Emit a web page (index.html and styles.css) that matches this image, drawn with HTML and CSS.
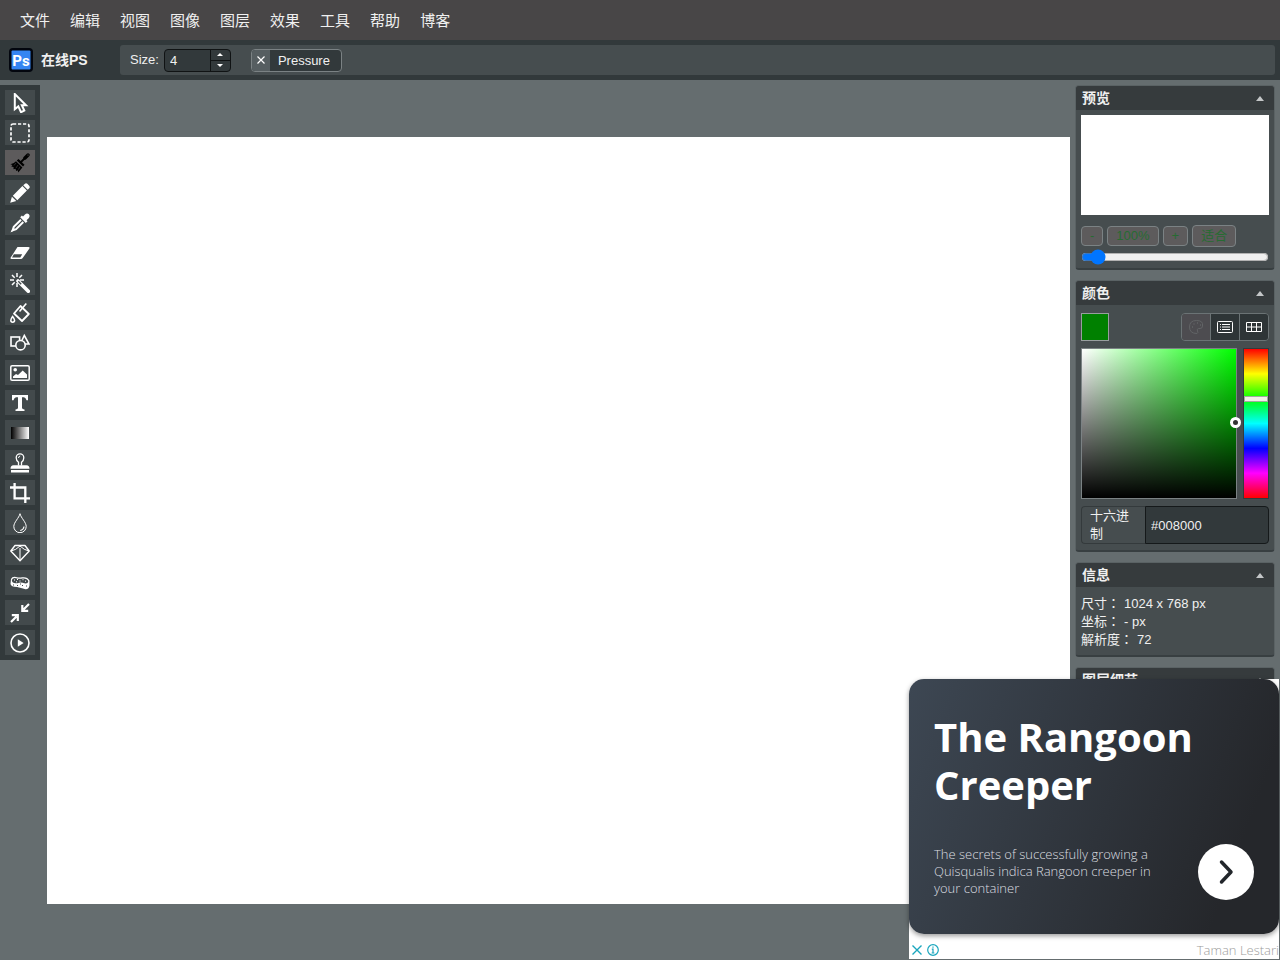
FILE: index.html
```html
<!DOCTYPE html>
<html lang="zh-CN">
<head>
<meta charset="utf-8">
<meta name="viewport" content="width=device-width, initial-scale=1">
<title>在线PS</title>
<link rel="stylesheet" href="styles.css">
</head>
<body>
<nav class="menu">
  <a href="#">文件</a><a href="#">编辑</a><a href="#">视图</a><a href="#">图像</a><a href="#">图层</a><a href="#">效果</a><a href="#">工具</a><a href="#">帮助</a><a href="#">博客</a>
</nav>
<header class="topbar">
  <a class="brand" href="#">
    <svg class="logo" viewBox="0 0 24 24" aria-hidden="true"><rect width="24" height="24" rx="4" fill="#03060e"/><rect x="2.500" y="2.500" width="19" height="19" rx="1" fill="#3585f2"/><text x="12" y="17.500" text-anchor="middle" class="logo-text">Ps</text></svg>
    <span>在线PS</span>
  </a>
  <div class="attributes">
    <label for="size">Size:</label>
    <div class="stepper">
      <input id="size" type="text" value="4">
      <div class="steps">
        <button type="button" aria-label="Increase"><i class="caret up"></i></button>
        <button type="button" aria-label="Decrease"><i class="caret down"></i></button>
      </div>
    </div>
    <button class="toggle" type="button"><span class="toggle-mark"><svg viewBox="0 0 8 8"><path d="M.5.5l7 7M7.500.5l-7 7" stroke="#fff" stroke-width="1.200"/></svg></span><span class="toggle-name">Pressure</span></button>
  </div>
</header>
<div class="workspace">
  <aside class="tools">
    <button type="button" aria-label="Select"><svg viewBox="0 0 20 20"><path d="M4.800 1V16.200L8.300 13.400 11 19.200 14.300 17.600 11.800 12.200H16Z" fill="none" stroke="#fff" stroke-width="2"/></svg></button>
    <button type="button" aria-label="Selection"><svg viewBox="0 0 20 20"><rect x="1" y="1" width="18" height="18" rx="2" fill="none" stroke="#fff" stroke-width="1.700" stroke-dasharray="3.200 1.800"/></svg></button>
    <button type="button" class="active" aria-label="Brush"><svg viewBox="0 0 20 20"><path d="M10.500 9.500 17 3" stroke="#000" stroke-width="1.800"/><path d="M15 5 18 2" stroke="#000" stroke-width="3.400" stroke-linecap="round"/><circle cx="18" cy="2" r=".6" fill="#5d5b5c"/><path d="M8.500 6 14.500 11.800 13 13.500 6.800 7.500Z" fill="#000"/><path d="M6 8.200 12.400 14.500 8.300 19.500 7.700 17.300 6.200 18 5.500 15.800 3.500 16.300 3.600 14 1.300 13.600 2.500 12 .4 11.200Q3.800 10.800 6 8.200Z" fill="#000"/><path d="M6 10 4 12.500M8 12 6 15M10 13.700 8.500 16.500" stroke="#5d5b5c" stroke-width=".5"/></svg></button>
    <button type="button" aria-label="Pencil"><svg viewBox="0 0 20 20"><path d="M14.700.9Q16-.2 17.300.8L19.200 2.700Q20.300 4 19.200 5.300L17.700 6.800 13.200 2.300ZM12.400 3.100 16.900 7.600 7.300 17.200 2.800 12.700ZM1.900 13.700 6.300 18.100.2 19.800Z" fill="#fff"/></svg></button>
    <button type="button" aria-label="Pick color"><svg viewBox="0 0 20 20"><path d="M13 3.600 15 1.400Q17-.3 18.900 1.300 20.400 3.200 18.700 5.200L16.500 7.200 17.500 8.200 15.800 9.900 10.200 4.300 11.900 2.600Z" fill="#fff"/><path d="M11 6.700 3.800 13.900 2.600 17.400 6.100 16.200 13.300 9" fill="none" stroke="#fff" stroke-width="2"/><path d="M2.500 16 .4 19.600 4 17.600Z" fill="#fff"/></svg></button>
    <button type="button" aria-label="Erase"><svg viewBox="0 0 20 20"><path d="M7.500 4H18.300Q20.300 4 19.200 5.700L12.700 15.100Q12 16 11 16H1.700Q-.3 16 .9 14.300Z" fill="#fff"/><path d="M3.900 11.200H12.200L10.300 14.500H2Z" fill="#434a4c"/></svg></button>
    <button type="button" aria-label="Magic wand"><svg viewBox="0 0 20 20"><path d="M8 8 18.300 18.300" stroke="#fff" stroke-width="3.600" stroke-linecap="round"/><path d="M8.300 8.300 11.200 11.200" stroke="#434a4c" stroke-width="1.400"/><path d="M7 0V4M7 10V14M0 7H4M10 7H14M2 2 4.700 4.700M12 2 9.300 4.700M2 12 4.700 9.300" stroke="#fff" stroke-width="1.500"/></svg></button>
    <button type="button" aria-label="Fill"><svg viewBox="0 0 20 20"><path d="M10.500 3 18.800 11 12 18 4 10.500Z" fill="none" stroke="#fff" stroke-width="1.800" stroke-linejoin="round"/><path d="M9.500 8.500 16.300.6" stroke="#fff" stroke-width="1.600"/><path d="M2.600 13.500Q.8 16 .8 17.300A1.900 1.900 0 0 0 4.600 17.300Q4.600 16 2.600 13.500Z" fill="none" stroke="#fff" stroke-width="1.500"/></svg></button>
    <button type="button" aria-label="Shapes"><svg viewBox="0 0 20 20"><g fill="#434a4c" stroke="#fff" stroke-width="1.600"><path d="M14.300 2.400 19 11H10.200Z"/><rect x="1" y="4" width="8.600" height="9"/><circle cx="10.500" cy="12.200" r="4.700"/></g></svg></button>
    <button type="button" aria-label="Image"><svg viewBox="0 0 20 20"><rect x=".8" y="2.800" width="18.400" height="14.400" rx="1.300" fill="none" stroke="#fff" stroke-width="1.500"/><circle cx="5.200" cy="6.700" r="1.800" fill="#fff"/><path d="M3 15V13.500L6 11 8 12 12.700 7.500 17 11.500V15Z" fill="#fff"/></svg></button>
    <button type="button" aria-label="Text"><svg viewBox="0 0 20 20"><path d="M2 2H18V7.300H16.500Q15.800 4.500 14 4.200H12V15Q12.200 16.400 14.500 16.500V18H5.500V16.500Q7.800 16.400 8 15V4.200H6Q4.200 4.500 3.500 7.300H2Z" fill="#fff"/></svg></button>
    <button type="button" aria-label="Gradient"><svg viewBox="0 0 20 20"><defs><linearGradient id="shade"><stop stop-color="#000"/><stop offset="1" stop-color="#fff"/></linearGradient></defs><rect x="1" y="4" width="18" height="12" fill="url(#shade)"/></svg></button>
    <button type="button" aria-label="Clone"><svg viewBox="0 0 20 20"><path d="M8.500 12.500V9.200Q6.200 7.500 6.200 4.700A3.800 3.800 0 0 1 13.800 4.700Q13.800 7.500 11.500 9.200V12.500" fill="none" stroke="#fff" stroke-width="1.300"/><path d="M8.500 5Q8.500 3.200 10.200 3" fill="none" stroke="#fff"/><path d="M3.500 12.200H16.500Q19.500 12.500 19.500 15.700H.5Q.5 12.500 3.500 12.200ZM1 17H19V19.400H1Z" fill="#fff"/></svg></button>
    <button type="button" aria-label="Crop"><svg viewBox="0 0 20 20"><path d="M0 4.500H15.300V20M4.600 0V15.300H20" fill="none" stroke="#fff" stroke-width="2.300"/></svg></button>
    <button type="button" aria-label="Blur"><svg viewBox="0 0 20 20"><path d="M10 .7C9 5 3.800 9.300 3.800 13.500A6.200 6.200 0 0 0 16.200 13.500C16.200 9.300 11 5 10 .7Z" fill="none" stroke="#fff" stroke-width="1"/><path d="M14 13.500Q13.500 17 10.200 17.500" fill="none" stroke="#fff" stroke-width="1.200"/></svg></button>
    <button type="button" aria-label="Sharpen"><svg viewBox="0 0 20 20"><path d="M5 2.500H15L19.200 8 10 17.800.8 8Z" fill="none" stroke="#fff" stroke-width="1.400" stroke-linejoin="round"/><path d="M1 8 5.700 6.300 10 3 14.300 6.300 19 8M10 5V17" fill="none" stroke="#fff" stroke-width="1"/></svg></button>
    <button type="button" aria-label="Desaturate"><svg viewBox="0 0 20 20"><path d="M1 6Q2.200 3.300 6 4 9.500 5 12 4.300 17.500 3.500 19.500 7.500V12.500Q19 16.400 15.500 16.200L12 15.200 7 14Q1 14 .5 11Z" fill="#fff"/><path d="M1.800 7Q3 4.500 6 5.200 9.500 6.200 12.500 5.500 17 5 18.300 8.200 18 11 14.500 10.300 11 8.700 7.500 10.200 2 11 1.800 7Z" fill="#434a4c"/><path d="M4 7h1M7 6.500h1M9.500 8h1M12.500 6.700h1M15 8.200h1M6 8.800h1" stroke="#fff" stroke-width="1"/><path d="M3 12h1M7 12.500h1M12 12.500h1M16 13h1M10 11h1" stroke="#434a4c" stroke-width="1"/></svg></button>
    <button type="button" aria-label="Pinch"><svg viewBox="0 0 20 20"><path d="M19 1 13.500 6.500M12.300 2V7.800H18.200M1 19 6.500 13.500M1.800 12.200H7.800V18" fill="none" stroke="#fff" stroke-width="2.200"/></svg></button>
    <button type="button" aria-label="Animation"><svg viewBox="0 0 20 20"><circle cx="10" cy="10" r="9" fill="none" stroke="#fff" stroke-width="1.600"/><path d="M7.800 6.300V13.700L13.600 10Z" fill="#fff"/></svg></button>
  </aside>
  <main class="stage"><canvas class="paper"></canvas></main>
  <aside class="panels">
    <section class="panel">
      <h2>预览<i class="caret up"></i></h2>
      <div class="panel-body preview-body">
        <div class="preview"></div>
        <div class="zoom"><button type="button">-</button><button type="button">100%</button><button type="button">+</button><button type="button" class="fit">适合</button></div>
        <input class="zoom-range" type="range" min="0" max="100" value="5" aria-label="Zoom">
      </div>
    </section>
    <section class="panel">
      <h2>颜色<i class="caret up"></i></h2>
      <div class="panel-body color-body">
        <div class="color-head">
          <button type="button" class="swatch" aria-label="Current color"></button>
          <div class="modes">
            <button type="button" class="off" disabled aria-label="Picker"><svg viewBox="0 0 16 16"><path d="M9 14.500Q1.500 14.500 1.500 8T8.500 1.500 14.500 7Q14.500 9.500 12 9.500H10.500Q8.500 10 9.500 12 10.500 14 9 14.500Z" fill="none" stroke="#626466"/><path d="M4 8h1M5.500 5h1M9 4h1M12 6h1" stroke="#626466" stroke-width="1.500"/></svg></button>
            <button type="button" aria-label="Channels"><svg viewBox="0 0 16 16"><rect x=".5" y="2.500" width="15" height="11" rx="1" fill="none" stroke="#fff"/><path d="M3 5.500h1M3 8h1M3 10.500h1M5 5.500h8M5 8h8M5 10.500h8" stroke="#fff"/></svg></button>
            <button type="button" aria-label="Swatches"><svg viewBox="0 0 16 16"><path d="M.5 3.500h15v9H.5ZM.5 8h15M5.500 3.500v9M10.500 3.500v9" fill="none" stroke="#fff"/></svg></button>
          </div>
        </div>
        <div class="picker">
          <div class="shade"><span class="shade-mark"></span></div>
          <div class="hue"><span class="hue-mark"></span></div>
        </div>
        <div class="hex"><label for="hex">十六进制</label><input id="hex" type="text" value="#008000"></div>
      </div>
    </section>
    <section class="panel">
      <h2>信息<i class="caret up"></i></h2>
      <dl class="panel-body info">
        <div><dt>尺寸<span lang="zh-TW">：</span></dt><dd>1024 x 768 px</dd></div>
        <div><dt>坐标<span lang="zh-TW">：</span></dt><dd>- px</dd></div>
        <div><dt>解析度<span lang="zh-TW">：</span></dt><dd>72</dd></div>
      </dl>
    </section>
    <section class="panel">
      <h2>图层细节<i class="caret up"></i></h2>
      <div class="panel-body"></div>
    </section>
  </aside>
</div>
<aside class="ad">
  <a class="ad-card" href="#">
    <strong>The Rangoon Creeper</strong>
    <span class="ad-row">
      <span class="ad-text">The secrets of successfully growing a Quisqualis indica Rangoon creeper in your container</span>
      <span class="ad-go"><svg viewBox="0 0 56 56"><path d="M23.500 18 33 28 23.500 38" fill="none" stroke="#22262b" stroke-width="3.500" stroke-linecap="round" stroke-linejoin="round"/></svg></span>
    </span>
  </a>
  <div class="ad-foot">
    <button type="button" aria-label="Close"><svg viewBox="0 0 12 12"><path d="M1.500 1.500l9 9M10.500 1.500l-9 9" stroke="#1aa6bd" stroke-width="1.400"/></svg></button>
    <button type="button" aria-label="Ad info"><svg viewBox="0 0 12 12"><circle cx="6" cy="6" r="5.300" fill="none" stroke="#1aa6bd" stroke-width="1.200"/><path d="M6 2.500v1.300M4.800 5.200H6V9M4.600 9h2.800" fill="none" stroke="#1aa6bd" stroke-width="1.200"/></svg></button>
    <span>Taman Lestari</span>
  </div>
</aside>
</body>
</html>
```
FILE: styles.css
```css
* { box-sizing: border-box; }
body {
  margin: 0;
  height: 100vh;
  display: flex;
  flex-direction: column;
  overflow: hidden;
  background: #656d6f;
  color: #f0f0f0;
  font: 13px/18px "Liberation Sans", "Noto Sans CJK SC", sans-serif;
}
button, input { font: inherit; color: inherit; margin: 0; }
button { padding: 0; border: 0; background: none; }
svg { display: block; }
a { color: inherit; text-decoration: none; }

.menu {
  display: flex;
  flex: none;
  height: 40px;
  padding: 0 10px;
  background: #484647;
  font-size: 15px;
}
.menu a { padding: 0 10px; line-height: 42px; }

.topbar {
  display: flex;
  flex: none;
  height: 40px;
  padding: 5px;
  background: #32393b;
}
.brand {
  display: flex;
  align-items: center;
  gap: 8px;
  width: 115px;
  padding-left: 4px;
  font-size: 14px;
  font-weight: bold;
}
.logo { width: 24px; height: 24px; }
.logo-text { font: bold 15px Roboto, sans-serif; fill: #fff; }
.attributes {
  display: flex;
  align-items: center;
  flex: 1;
  padding: 0 10px;
  border-radius: 3px;
  background: #464d4f;
}
.attributes label { margin-right: 5px; }
.stepper {
  display: flex;
  width: 67px;
  height: 23px;
  margin-right: 20px;
  border: 1px solid #101314;
  border-radius: 4px;
  overflow: hidden;
  background: #32393b;
}
.stepper input {
  flex: 1;
  min-width: 0;
  padding: 1px 5px 0;
  border: 0;
  background: none;
}
.steps {
  display: flex;
  flex-direction: column;
  width: 20px;
  border-left: 1px solid #101314;
}
.steps button { flex: 1; display: flex; align-items: center; justify-content: center; }
.steps button + button { border-top: 1px solid #101314; }
.caret { border: 4px solid transparent; }
.caret.up { border-top: 0; border-bottom: 5px solid #c4c7c8; }
.caret.down { border-bottom: 0; border-top: 5px solid #c4c7c8; }
.steps .caret { border-width: 3px; }
.steps .caret.up { border-top: 0; border-bottom-color: #fff; }
.steps .caret.down { border-bottom: 0; border-top-color: #fff; }
.toggle {
  display: flex;
  height: 23px;
  border: 1px solid #7b8284;
  border-radius: 4px;
  overflow: hidden;
  background: #32393b;
}
.toggle-mark {
  display: flex;
  align-items: center;
  justify-content: center;
  width: 18px;
  height: 21px;
  background: #565e61;
}
.toggle-mark svg { width: 8px; height: 8px; }
.toggle-name { padding: 0 11px 0 8px; line-height: 22px; }

.workspace { display: flex; flex: 1; min-height: 0; }
.tools {
  display: flex;
  flex-direction: column;
  align-self: flex-start;
  gap: 5px;
  margin-top: 5px;
  padding: 5px;
  background: #32393b;
}
.tools button {
  display: flex;
  align-items: center;
  justify-content: center;
  width: 30px;
  height: 25px;
  background: #434a4c;
}
.tools .active { background: #5d5b5c; }
.tools svg { width: 20px; height: 20px; }
.stage { flex: 1; min-width: 0; padding: 57px 5px 56px 7px; }
.paper { display: block; width: 100%; height: 100%; background: #fff; }

.panels {
  display: flex;
  flex-direction: column;
  gap: 10px;
  width: 200px;
  margin: 5px 5px 0 0;
}
.panel {
  flex: none;
  border: 1px solid #5a6264;
  border-bottom: 2px solid #383f41;
  border-radius: 4px;
  overflow: hidden;
  background: #464d4f;
}
.panel h2 {
  display: flex;
  align-items: center;
  justify-content: space-between;
  height: 24px;
  margin: 0;
  padding: 0 10px 0 6px;
  background: #363b3d;
  font-size: 14px;
}
.panel-body { padding: 5px; }
.preview-body { padding-bottom: 3px; }
.preview { height: 100px; background: #fff; }
.zoom { display: flex; align-items: center; gap: 4px; margin-top: 10px; }
.zoom button {
  height: 20px;
  padding: 0 8px;
  border: 1px solid #7b8284;
  border-radius: 4px;
  background: #5d5b5c;
  color: #276b32;
  line-height: 18px;
}
.zoom .fit { height: 22px; line-height: 20px; }
.zoom-range { display: block; width: 100%; height: 16px; margin-top: 2px; }

.color-body { display: flex; flex-direction: column; gap: 7px; padding: 8px 5px 6px; }
.color-head { display: flex; justify-content: space-between; }
.swatch { width: 28px; height: 28px; border: 1px solid #989e9f; background: #008000; }
.modes {
  display: flex;
  border: 1px solid #6b7375;
  border-radius: 4px;
  overflow: hidden;
}
.modes button {
  display: flex;
  align-items: center;
  justify-content: center;
  width: 29px;
  height: 26px;
  background: #2e3537;
}
.modes button + button { border-left: 1px solid #6b7375; }
.modes .off { width: 28px; background: #4d4c50; }
.modes svg { width: 16px; height: 16px; }
.picker { display: flex; gap: 6px; height: 151px; }
.shade {
  position: relative;
  flex: 1;
  border: 1px solid #7b8284;
  background: linear-gradient(to top, #000, transparent), linear-gradient(to right, #fff, #0f0);
}
.shade-mark {
  position: absolute;
  right: -5px;
  top: 68px;
  width: 11px;
  height: 11px;
  border: 3px solid #fff;
  border-radius: 50%;
  background: #333;
}
.hue {
  position: relative;
  width: 26px;
  border: 1px solid #333a3c;
  background: linear-gradient(#f00, #ff0, #0f0, #0ff, #00f, #f0f, #f00);
}
.hue-mark {
  position: absolute;
  left: 0;
  right: 0;
  top: 47px;
  height: 6px;
  border: 1px solid #a1a8a0;
  background: #f1efe8;
}
.hex { display: flex; }
.hex label {
  width: 64px;
  padding: 0 8px;
  border: 1px solid #343a3c;
  border-right: 0;
  border-radius: 4px 0 0 4px;
}
.hex input {
  flex: 1;
  min-width: 0;
  padding: 1px 5px 0;
  border: 1px solid #15191a;
  border-radius: 0 4px 4px 0;
  background: #32393b;
}
.info { margin: 0; padding: 8px 5px 6px; }
.info div { display: flex; gap: 4px; }
.info dd { margin: 0; }

.ad {
  position: fixed;
  right: 1px;
  bottom: 1px;
  width: 370px;
  background: #fff;
  font-family: "Open Sans", sans-serif;
}
.ad-card {
  display: flex;
  flex-direction: column;
  justify-content: space-between;
  min-height: 255px;
  padding: 34px 25px;
  border-radius: 15px;
  background: linear-gradient(110deg, #3d4753, #25272b 85%);
  box-shadow: 0 2px 5px #0006;
}
.ad-card strong { color: #fff; font-size: 40px; line-height: 48px; }
.ad-row { display: flex; align-items: center; justify-content: space-between; }
.ad-text { width: 235px; padding-bottom: 2px; color: #dcdee0; font-weight: 350; line-height: 17px; }
.ad-go { width: 56px; height: 56px; border-radius: 50%; background: #fff; }
.ad-foot { display: flex; align-items: center; gap: 4px; height: 25px; padding: 6px 0 0 2px; }
.ad-foot svg { width: 12px; height: 12px; }
.ad-foot span { margin-left: auto; color: #9c9c9c; font-weight: 300; }
```
